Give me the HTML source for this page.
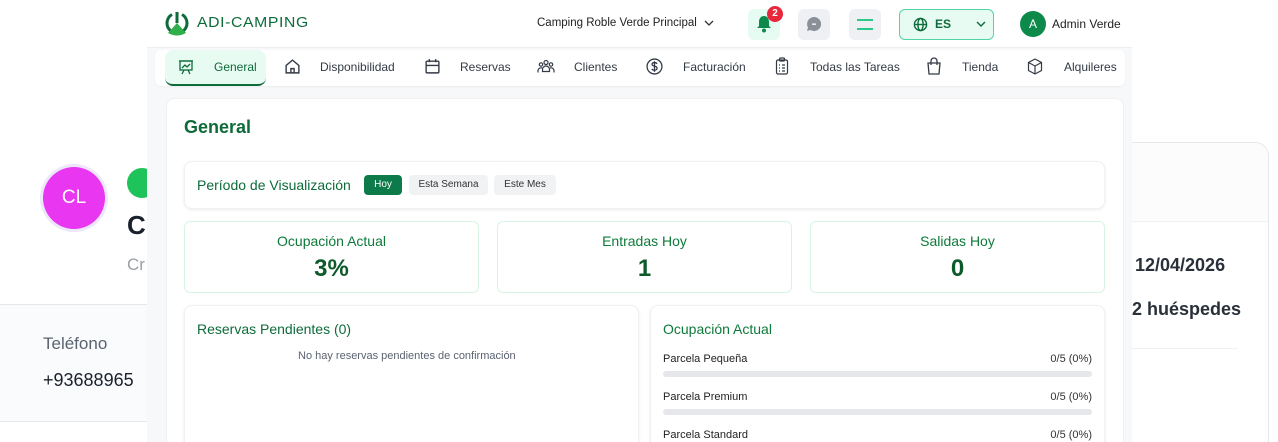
<!DOCTYPE html>
<html><head><meta charset="utf-8"><style>
*{box-sizing:border-box;margin:0;padding:0}
html,body{width:1278px;height:442px;overflow:hidden}
body{position:relative;background:#fff;font-family:"Liberation Sans",sans-serif;}
#w{position:relative;width:1278px;height:442px;overflow:hidden}
.a{position:absolute}
.t{position:absolute;white-space:nowrap}
.g{color:#0d6b3a}
.card{position:absolute;background:#fff;border-radius:8px;box-shadow:0 1px 3px rgba(0,0,0,.08);border:1px solid #f0f1f3}
.stat{position:absolute;background:#fff;border:1px solid #d6f5e3;border-radius:6px;text-align:center}
.nav span{position:absolute;font-size:12px;color:#333a45;top:60px}
.bar{position:absolute;left:663px;width:429px;height:6px;border-radius:3px;background:#e5e7eb}
.lbl{position:absolute;left:663px;font-size:11px;color:#222}
.val{position:absolute;right:186px;font-size:11px;color:#333}
</style></head><body><div id="w">
<!-- background left page -->
<div class="a" style="left:40px;top:164px;width:68px;height:68px;border-radius:50%;background:#ede7fb"></div>
<div class="a" style="left:43px;top:167px;width:62px;height:62px;border-radius:50%;background:#e936f0;color:#fff;font-size:19px;text-align:center;line-height:62px">CL</div>
<div class="a" style="left:127px;top:168px;width:30px;height:30px;border-radius:15px;background:#1ec45a"></div>
<div class="t" style="left:127px;top:210px;font-size:26px;font-weight:bold;color:#1a202c">Cl</div>
<div class="t" style="left:127px;top:255px;font-size:17px;color:#9aa0a8">Cr</div>
<div class="a" style="left:0;top:304px;width:150px;height:118px;background:#fafbfc;border-top:1px solid #e5e7eb;border-bottom:1px solid #e5e7eb"></div>
<div class="t" style="left:43px;top:334px;font-size:17px;color:#5b6370">Teléfono</div>
<div class="t" style="left:43px;top:370px;font-size:18px;color:#1a202c">+93688965</div>
<!-- background right card -->
<div class="a" style="left:1110px;top:142px;width:159px;height:320px;border:1px solid #e5e7eb;border-radius:14px;background:#fff"></div>
<div class="a" style="left:1111px;top:143px;width:157px;height:79px;border-radius:14px 14px 0 0;background:#fbfcfb;border-bottom:1px solid #eef0f2"></div>
<div class="t" style="left:1124px;top:255px;font-size:18px;font-weight:bold;color:#2a303a">- 12/04/2026</div>
<div class="t" style="left:1132px;top:299px;font-size:18px;font-weight:bold;color:#2a303a">2 huéspedes</div>
<div class="a" style="left:1132px;top:348px;width:106px;height:1px;background:#eef0f2"></div>
<!-- overlay panel -->
<div class="a" style="left:147px;top:0;width:985px;height:442px;background:#f7f8fa"></div>
<div class="a" style="left:147px;top:0;width:985px;height:48px;background:#fff;border-bottom:1px solid #eceef0"></div>
<!-- logo -->
<svg class="a" style="left:164px;top:11px" width="26" height="26" viewBox="0 0 26 26"><path d="M8 3.5A10 10 0 1 0 18 3.5" fill="none" stroke="#0d6b3a" stroke-width="3"/><rect x="11.5" y="1" width="3" height="11" fill="#0d6b3a"/><path d="M13 12L4 22Q13 27 22 22Z" fill="#2fae4a"/></svg>
<div class="t" style="left:197px;top:14px;font-size:15px;color:#0d6b3a;letter-spacing:0.6px;transform:scaleX(1.05);transform-origin:left">ADI-CAMPING</div>
<div class="t" style="left:537px;top:17px;font-size:11.5px;color:#222">Camping Roble Verde Principal</div>
<svg class="a" style="left:704px;top:19px" width="10" height="8"><path d="M1 2l4 4 4-4" fill="none" stroke="#333" stroke-width="1.3"/></svg>
<div class="a" style="left:748px;top:9px;width:32px;height:31px;border-radius:6px;background:#e6fbf1"></div>
<svg class="a" style="left:756px;top:15px" width="16" height="18" viewBox="0 0 16 18"><path d="M8 1C4.5 1 3 4 3 7v4L1 13h14l-2-2V7c0-3-1.5-6-5-6z" fill="#0d8a4a"/><circle cx="8" cy="15.5" r="2" fill="#0d8a4a"/></svg>
<div class="a" style="left:767px;top:6px;width:16px;height:16px;border-radius:50%;background:#e8283a;color:#fff;font-size:10px;text-align:center;line-height:16px;font-weight:bold">2</div>
<div class="a" style="left:798px;top:9px;width:32px;height:31px;border-radius:6px;background:#eef0f3"></div>
<svg class="a" style="left:806px;top:16px" width="16" height="16" viewBox="0 0 16 16"><path d="M8 1a7 7 0 1 1-3.5 13L1 15l1-3.5A7 7 0 0 1 8 1z" fill="#8a9099"/><rect x="6" y="7.5" width="4" height="1.3" fill="#fff"/></svg>
<div class="a" style="left:849px;top:9px;width:32px;height:31px;border-radius:6px;background:#eef0f3"></div>
<div class="a" style="left:857px;top:19px;width:16px;height:2px;background:#2cc98a"></div>
<div class="a" style="left:857px;top:28px;width:16px;height:2px;background:#2cc98a"></div>
<div class="a" style="left:899px;top:9px;width:95px;height:31px;border-radius:6px;background:#e8fbf2;border:1.5px solid #4fd6a3"></div>
<svg class="a" style="left:913px;top:17px" width="15" height="15" viewBox="0 0 16 16"><g fill="none" stroke="#0d6b3a" stroke-width="1.5"><circle cx="8" cy="8" r="6.5"/><ellipse cx="8" cy="8" rx="2.8" ry="6.5"/><path d="M1.5 8h13"/></g></svg>
<div class="t" style="left:935px;top:17px;font-size:12px;font-weight:bold;color:#0d6b3a">ES</div>
<svg class="a" style="left:976px;top:20px" width="10" height="8"><path d="M1 2l4 4 4-4" fill="none" stroke="#0d6b3a" stroke-width="1.4"/></svg>
<div class="a" style="left:1020px;top:11px;width:26px;height:26px;border-radius:50%;background:#0d8a4a;color:#fff;font-size:12px;text-align:center;line-height:26px">A</div>
<div class="t" style="left:1052px;top:17px;font-size:12px;color:#222">Admin Verde</div>
<!-- nav -->
<div class="a" style="left:155px;top:50px;width:970px;height:36px;background:#fff;border-radius:6px;box-shadow:0 1px 2px rgba(0,0,0,.05)"></div>
<div class="a" style="left:165px;top:50px;width:101px;height:36px;background:#e8fbf2;border-radius:8px;border-bottom:2px solid #0d6b3a"></div>
<div class="nav">
<svg class="a" style="left:178px;top:59px" width="16" height="16" viewBox="0 0 16 16"><g fill="none" stroke="#0d6b3a" stroke-width="1.3"><rect x="2" y="2" width="12" height="9"/><path d="M1 2h14M4 9l3-3 2 2 3-3M6 11l-2 4M10 11l2 4"/></g></svg>
<span style="left:214px;color:#0d6b3a">General</span>
<svg class="a" style="left:284px;top:58px" width="17" height="17" viewBox="0 0 16 16"><g fill="none" stroke="#333a45" stroke-width="1.3"><path d="M2 7L8 2l6 5v7H2z"/><path d="M6.5 14v-4h3v4"/></g></svg>
<span style="left:320px">Disponibilidad</span>
<svg class="a" style="left:424px;top:58px" width="17" height="17" viewBox="0 0 16 16"><g fill="none" stroke="#333a45" stroke-width="1.3"><rect x="2" y="3" width="12" height="11" rx="1"/><path d="M5 1v3M11 1v3M2 7h12"/></g></svg>
<span style="left:460px">Reservas</span>
<svg class="a" style="left:537px;top:58px" width="18" height="17" viewBox="0 0 18 16"><g fill="none" stroke="#333a45" stroke-width="1.2"><circle cx="9" cy="4" r="2"/><circle cx="4" cy="6" r="1.7"/><circle cx="14" cy="6" r="1.7"/><path d="M5.5 13v-2a3.5 3.5 0 0 1 7 0v2zM1 14v-2a3 3 0 0 1 4-2.5M17 14v-2a3 3 0 0 0-4-2.5"/></g></svg>
<span style="left:574px">Clientes</span>
<svg class="a" style="left:646px;top:58px" width="17" height="17" viewBox="0 0 16 16"><g fill="none" stroke="#333a45" stroke-width="1.2"><circle cx="8" cy="8" r="7"/><path d="M10.3 5.5C10 4.7 9 4.3 8 4.3 6.6 4.3 5.7 5 5.7 6s1 1.4 2.3 1.7 2.4.8 2.4 1.9-1 1.9-2.4 1.9c-1.100 0-2.1-.4-2.5-1.3M8 3v10"/></g></svg>
<span style="left:683px">Facturación</span>
<svg class="a" style="left:774px;top:57px" width="16" height="18" viewBox="0 0 14 18"><g fill="none" stroke="#333a45" stroke-width="1.2"><rect x="1.5" y="3" width="11" height="14" rx="1.5"/><rect x="4.5" y="1" width="5" height="3" rx="1"/><path d="M4 8h1M7 8h3M4 11h1M7 11h3M4 14h1M7 14h3"/></g></svg>
<span style="left:810px">Todas las Tareas</span>
<svg class="a" style="left:926px;top:57px" width="16" height="18" viewBox="0 0 16 18"><g fill="none" stroke="#333a45" stroke-width="1.3"><path d="M2 6h12l-1 11H3z"/><path d="M5 8V4a3 3 0 0 1 6 0v4"/></g></svg>
<span style="left:962px">Tienda</span>
<svg class="a" style="left:1027px;top:58px" width="16" height="17" viewBox="0 0 16 17"><g fill="none" stroke="#333a45" stroke-width="1.2"><path d="M8 1l6.5 3.5v8L8 16l-6.5-3.5v-8z"/><path d="M1.5 4.5L8 8l6.5-3.5M8 8v8"/></g></svg>
<span style="left:1064px">Alquileres</span>
</div>
<!-- main card -->
<div class="a" style="left:166px;top:98px;width:958px;height:360px;background:#fff;border-radius:8px;border:1px solid #eef0f2"></div>
<div class="t g" style="left:184px;top:117px;font-size:18px;font-weight:bold">General</div>
<div class="card" style="left:184px;top:161px;width:921px;height:48px"></div>
<div class="t" style="left:197px;top:177px;font-size:14px;color:#0d6b3a">Período de Visualización</div>
<div class="a" style="left:364px;top:175px;width:38px;height:20px;border-radius:4px;background:#0d7a4a;color:#fff;font-size:10px;text-align:center;line-height:20px">Hoy</div>
<div class="a" style="left:409px;top:175px;width:79px;height:20px;border-radius:4px;background:#f1f2f4;color:#333;font-size:10px;text-align:center;line-height:20px">Esta Semana</div>
<div class="a" style="left:494px;top:175px;width:62px;height:20px;border-radius:4px;background:#f1f2f4;color:#333;font-size:10px;text-align:center;line-height:20px">Este Mes</div>
<div class="stat" style="left:184px;top:221px;width:295px;height:72px"><div style="margin-top:11px;font-size:14px;color:#0d7a3a">Ocupación Actual</div><div style="margin-top:6px;font-size:24px;font-weight:bold;color:#0d5a2a">3%</div></div>
<div class="stat" style="left:497px;top:221px;width:295px;height:72px"><div style="margin-top:11px;font-size:14px;color:#0d7a3a">Entradas Hoy</div><div style="margin-top:6px;font-size:24px;font-weight:bold;color:#0d5a2a">1</div></div>
<div class="stat" style="left:810px;top:221px;width:295px;height:72px"><div style="margin-top:11px;font-size:14px;color:#0d7a3a">Salidas Hoy</div><div style="margin-top:6px;font-size:24px;font-weight:bold;color:#0d5a2a">0</div></div>
<div class="card" style="left:184px;top:305px;width:455px;height:150px"></div>
<div class="t" style="left:197px;top:321px;font-size:14px;color:#0d6b3a">Reservas Pendientes (0)</div>
<div class="t" style="left:298px;top:350px;font-size:11px;color:#5b6370">No hay reservas pendientes de confirmación</div>
<div class="card" style="left:650px;top:305px;width:455px;height:150px"></div>
<div class="t" style="left:663px;top:321px;font-size:14px;color:#0d7a3a">Ocupación Actual</div>
<div class="lbl" style="top:353px">Parcela Pequeña</div><div class="val" style="top:353px">0/5 (0%)</div>
<div class="bar" style="top:371px"></div>
<div class="lbl" style="top:391px">Parcela Premium</div><div class="val" style="top:391px">0/5 (0%)</div>
<div class="bar" style="top:409px"></div>
<div class="lbl" style="top:429px">Parcela Standard</div><div class="val" style="top:429px">0/5 (0%)</div>
</div></body></html>
